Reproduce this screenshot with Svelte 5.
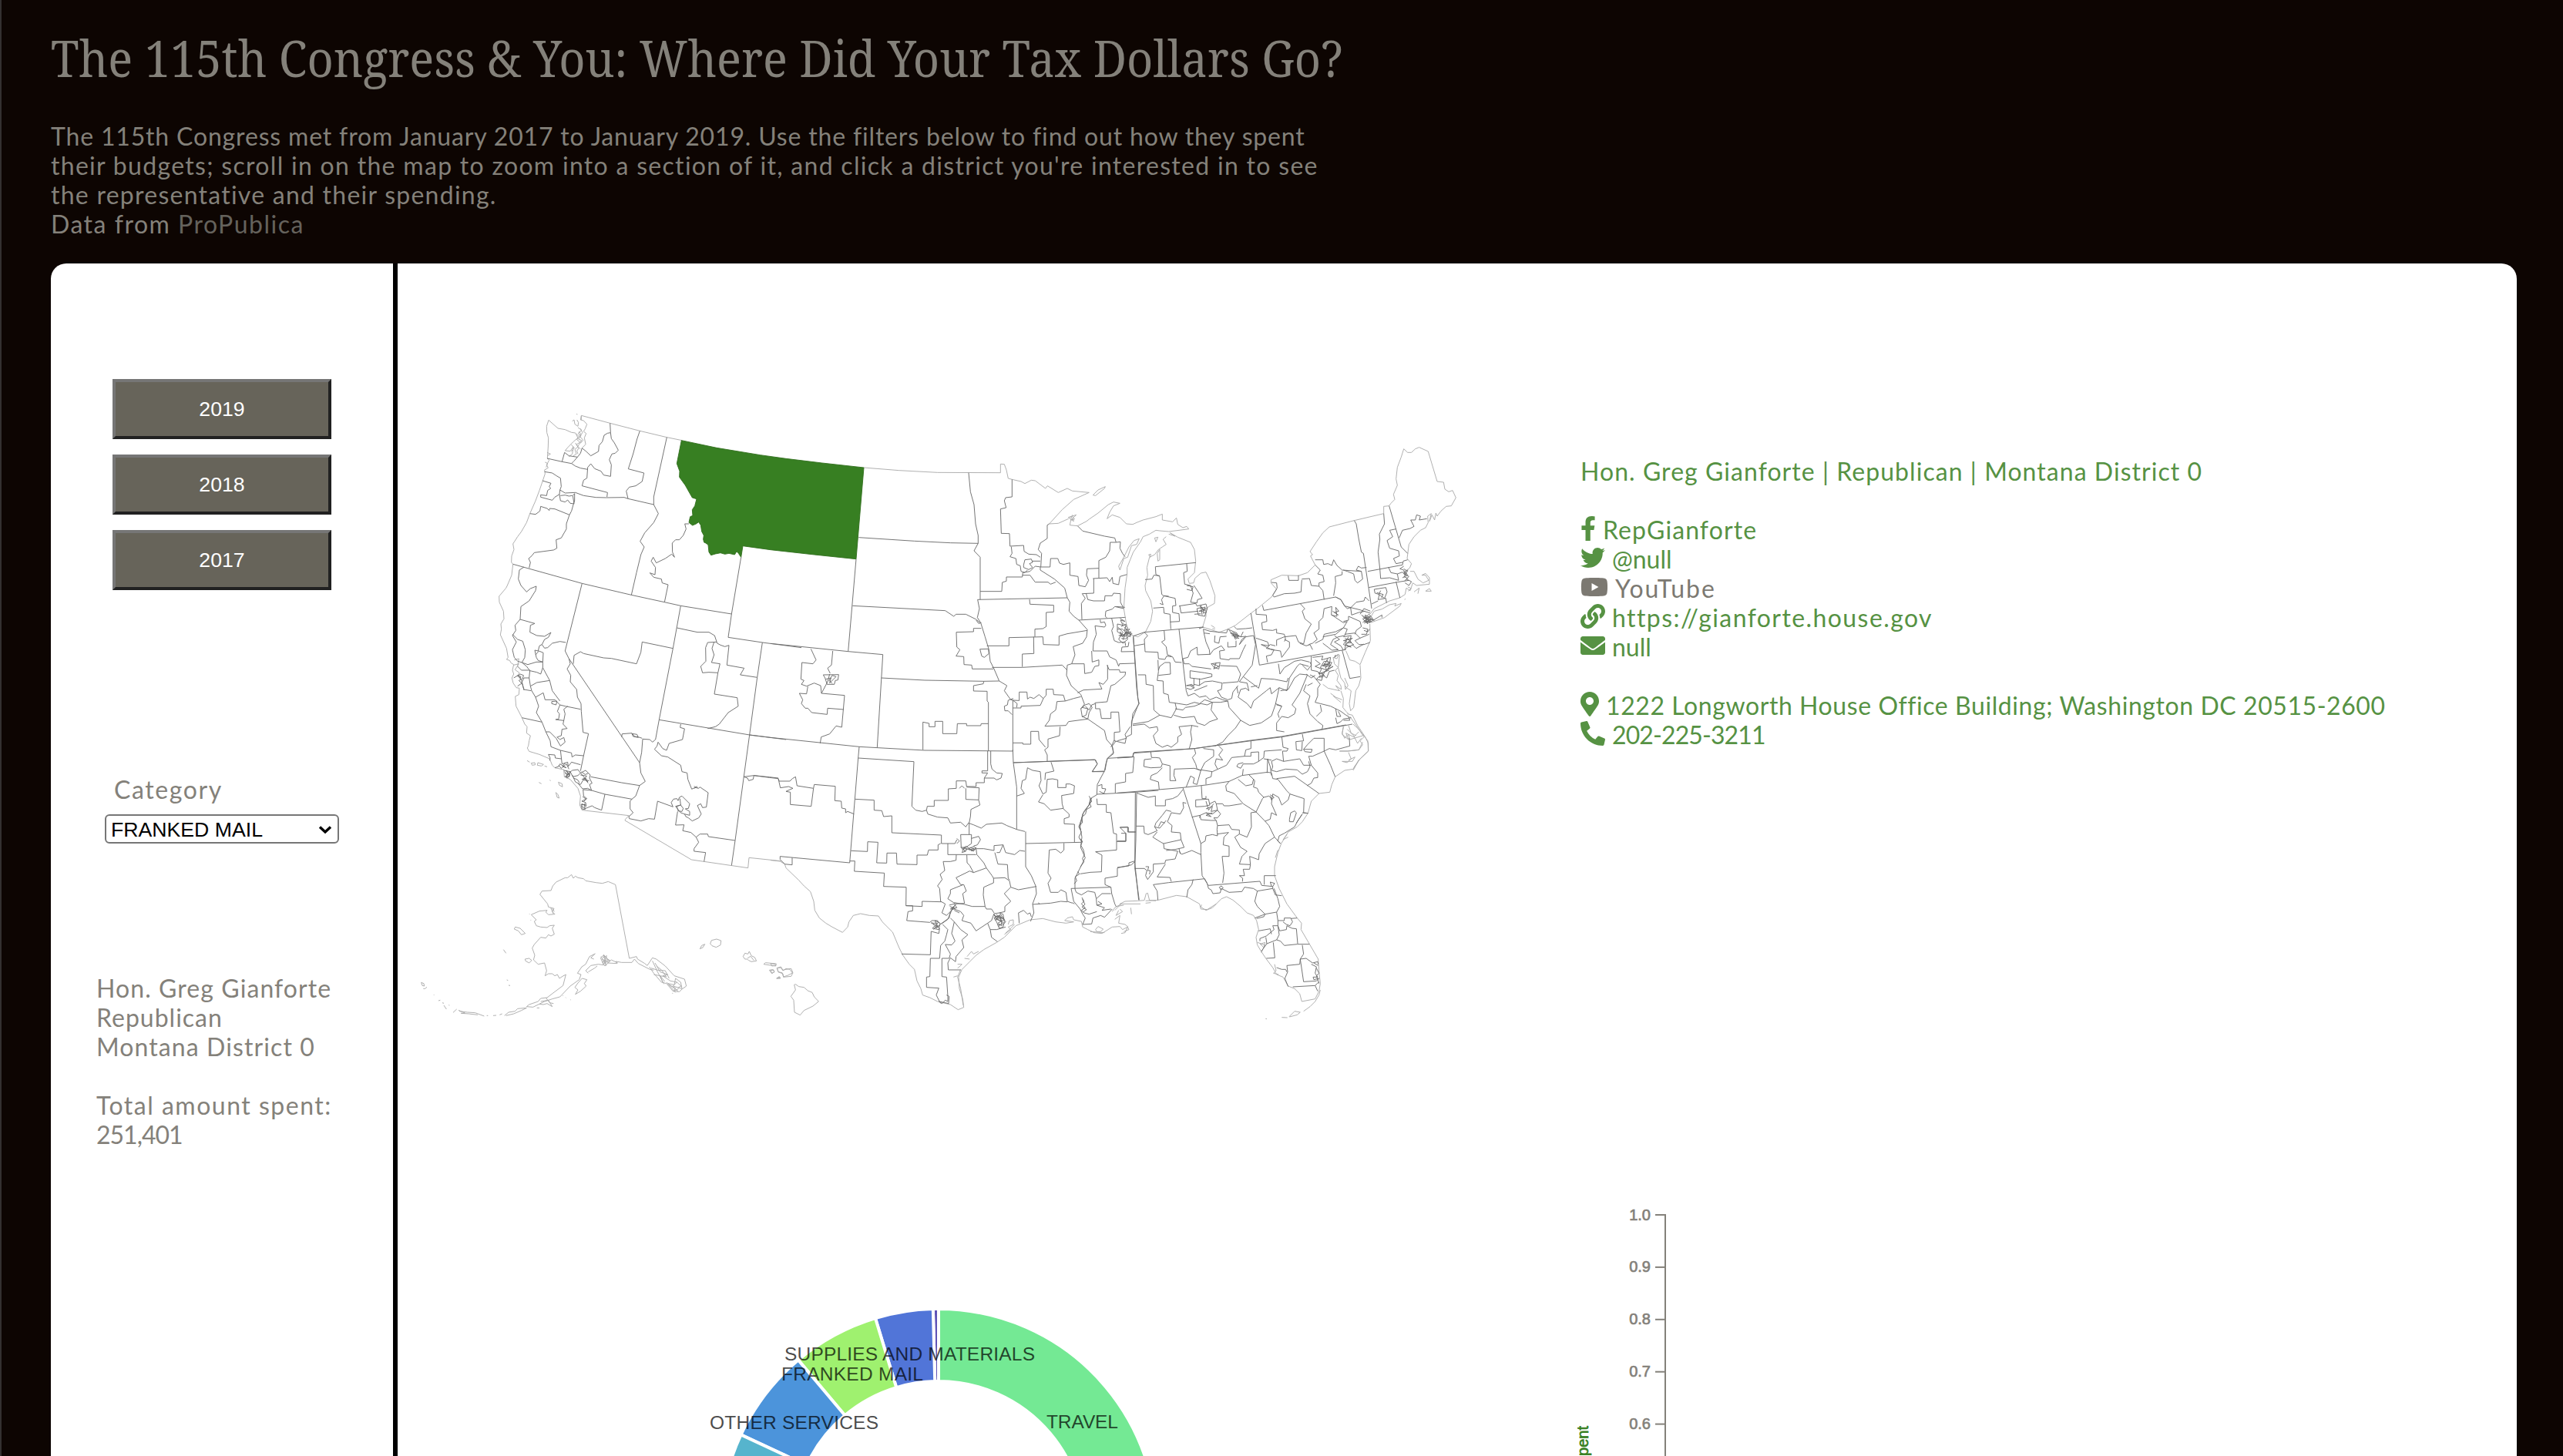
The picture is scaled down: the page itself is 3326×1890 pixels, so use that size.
<script>
  const years = ['2019', '2018', '2017'];

  // Each line of copy carries its own tracking in pixels.
  const intro = [
    { text: 'The 115th Congress met from January 2017 to January 2019. Use the filters below to find out how they spent', track: 0.83 },
    { text: "their budgets; scroll in on the map to zoom into a section of it, and click a district you're interested in to see", track: 1.3 },
    { text: 'the representative and their spending.', track: 1.25 }
  ];

  const summary = [
    { text: 'Hon. Greg Gianforte', track: 1.08 },
    { text: 'Republican', track: 1 },
    { text: 'Montana District 0', track: 1.1 },
    { text: '\u00a0', track: 0 },
    { text: 'Total amount spent:', track: 1.5 },
    { text: '251,401', track: -1 }
  ];

  const contacts = [
    {
      name: 'facebook', w: 320, text: 'RepGianforte', track: 1.1,
      d: 'M279.14 288l14.22-92.66h-88.91v-60.13c0-25.35 12.42-50.06 52.24-50.06h40.42V6.26S260.43 0 225.36 0c-73.22 0-121.08 44.38-121.08 124.72v70.62H22.89V288h81.39v224h100.17V288z'
    },
    {
      name: 'twitter', w: 512, text: '@null', track: 0,
      d: 'M459.37 151.716c.325 4.548.325 9.097.325 13.645 0 138.72-105.583 298.558-298.558 298.558-59.452 0-114.68-17.219-161.137-47.106 8.447.974 16.568 1.299 25.34 1.299 49.055 0 94.213-16.568 130.274-44.832-46.132-.975-84.792-31.188-98.112-72.772 6.498.974 12.995 1.624 19.818 1.624 9.421 0 18.843-1.3 27.614-3.573-48.081-9.747-84.143-51.98-84.143-102.985v-1.299c13.969 7.797 30.214 12.67 47.431 13.319-28.264-18.843-46.781-51.005-46.781-87.391 0-19.492 5.197-37.36 14.294-52.954 51.655 63.675 129.3 105.258 216.365 109.807-1.624-7.797-2.599-15.918-2.599-24.04 0-57.828 46.782-104.934 104.934-104.934 30.213 0 57.502 12.67 76.67 33.137 23.715-4.548 46.456-13.32 66.599-25.34-7.798 24.366-24.366 44.833-46.132 57.827 21.117-2.273 41.584-8.122 60.426-16.243-14.292 20.791-32.161 39.308-52.628 54.253z'
    },
    {
      name: 'youtube', w: 576, text: 'YouTube', track: 1.95,
      d: 'M549.655 124.083c-6.281-23.65-24.787-42.276-48.284-48.597C458.781 64 288 64 288 64S117.22 64 74.629 75.486c-23.497 6.322-42.003 24.947-48.284 48.597-11.412 42.867-11.412 132.305-11.412 132.305s0 89.438 11.412 132.305c6.281 23.65 24.787 41.5 48.284 47.821C117.22 448 288 448 288 448s170.78 0 213.371-11.486c23.497-6.321 42.003-24.171 48.284-47.821 11.412-42.867 11.412-132.305 11.412-132.305s0-89.438-11.412-132.305zm-317.51 213.508V175.185l142.739 81.205-142.739 81.201z'
    },
    {
      name: 'link', w: 512, text: 'https://gianforte.house.gov', track: 1.42,
      d: 'M326.612 185.391c59.747 59.809 58.927 155.698.36 214.59-.11.12-.24.25-.36.37l-67.2 67.2c-59.27 59.27-155.699 59.262-214.96 0-59.27-59.26-59.27-155.7 0-214.96l37.106-37.106c9.84-9.84 26.786-3.3 27.294 10.606.648 17.722 3.826 35.527 9.69 52.721 1.986 5.822.567 12.262-3.783 16.612l-13.087 13.087c-28.026 28.026-28.905 73.66-1.155 101.96 28.024 28.579 74.086 28.749 102.325.51l67.2-67.19c28.191-28.191 28.073-73.757 0-101.83-3.701-3.694-7.429-6.564-10.341-8.569a16.037 16.037 0 0 1-6.947-12.606c-.396-10.567 3.348-21.456 11.698-29.806l21.054-21.055c5.521-5.521 14.182-6.199 20.584-1.731a152.482 152.482 0 0 1 20.522 17.197zM467.547 44.449c-59.261-59.262-155.69-59.27-214.96 0l-67.2 67.2c-.12.12-.25.25-.36.37-58.566 58.892-59.387 154.781.36 214.59a152.454 152.454 0 0 0 20.521 17.196c6.402 4.468 15.064 3.789 20.584-1.731l21.054-21.055c8.35-8.35 12.094-19.239 11.698-29.806a16.037 16.037 0 0 0-6.947-12.606c-2.912-2.005-6.64-4.875-10.341-8.569-28.073-28.073-28.191-73.639 0-101.83l67.2-67.19c28.239-28.239 74.3-28.069 102.325.51 27.75 28.3 26.872 73.934-1.155 101.96l-13.087 13.087c-4.35 4.35-5.769 10.79-3.783 16.612 5.864 17.194 9.042 34.999 9.69 52.721.509 13.906 17.454 20.446 27.294 10.606l37.106-37.106c59.271-59.259 59.271-155.699.001-214.959z'
    },
    {
      name: 'mail', w: 512, text: 'null', track: 0,
      d: 'M502.3 190.8c3.9-3.1 9.7-.2 9.7 4.7V400c0 26.5-21.5 48-48 48H48c-26.5 0-48-21.5-48-48V195.6c0-5 5.7-7.8 9.7-4.7 22.4 17.4 52.1 39.5 154.1 113.6 21.1 15.4 56.7 47.8 92.2 47.6 35.7.3 72-32.8 92.3-47.6 102-74.1 131.6-96.3 154-113.7zM256 320c23.2.4 56.6-29.2 73.4-41.4 132.7-96.3 142.8-104.7 173.4-128.7 5.8-4.5 9.2-11.5 9.2-18.9v-19c0-26.5-21.5-48-48-48H48c-26.5 0-48 21.5-48 48v19c0 7.4 3.4 14.3 9.2 18.9 30.6 23.9 40.7 32.4 173.4 128.7 16.8 12.2 50.2 41.8 73.4 41.4z'
    },
    {
      name: 'address', w: 384, text: '1222 Longworth House Office Building; Washington DC 20515-2600', track: 0.57,
      d: 'M172.268 501.67C26.97 291.031 0 269.413 0 192 0 85.961 85.961 0 192 0s192 85.961 192 192c0 77.413-26.97 99.031-172.268 309.67-9.535 13.774-29.93 13.773-39.464 0zM192 272c44.183 0 80-35.817 80-80s-35.817-80-80-80-80 35.817-80 80 35.817 80 80 80z'
    },
    {
      name: 'phone', w: 512, text: '202-225-3211', track: -0.9,
      d: 'M497.39 361.8l-112-48a24 24 0 0 0-28 6.9l-49.6 60.6A370.66 370.66 0 0 1 130.6 204.11l60.6-49.6a23.94 23.94 0 0 0 6.9-28l-48-112A24.16 24.16 0 0 0 122.6.61l-104 24A24 24 0 0 0 0 48c0 256.5 207.9 464 464 464a24 24 0 0 0 23.4-18.6l24-104a24.29 24.29 0 0 0-14.01-27.6z'
    }
  ];

  // District geometry, stored per region at triple resolution with its own origin.
  const regions = [
    {
      name: 'northwest', x: 520, y: 500,
      coast:
        'M576 136 568 160 569 185 575 205 574 240 571 285 578 292 568 310 574 322 560 330 562 345 552 375 540 410 525 450 503 500 490 535 470 570 455 590 437 618 441 640 432 665 431 690 437 697 432 740 415 780 410 790 383 822 384 845 400 880 402 910 390 930 392 950 388 972 412 1025 418 1060 412 1068 424 1072 430 1082 440 1088 435 1110 440 1125 433 1140 438 1160 450 1178 462 1180 460 1205 446 1212 449 1250 462 1275 472 1295 483 1320' +
        'M576 136 612 168 640 173 665 184 680 186 690 205 670 222 650 243 640 255 660 257 672 240 668 268 655 278M703 135V118L815 148 931 178 1036 203 1095 215M668 140 675 135 678 152 690 160 692 145 686 135M703 120 700 135 712 138 725 152 718 170 712 180 722 188 715 205 720 230 706 245M690 165 705 175 690 188 702 196 692 210 704 215 695 230 688 240 700 248M680 225 690 240 678 250 684 268 672 275M695 180 700 190 695 200M684 190 694 200 686 212 698 222 684 232 694 244 686 256 690 268M698 168 708 184 698 200 710 214 700 226M664 232 676 244 664 258M570 262 583 268 572 274M562 300 572 305 566 320M440 1090 460 1085 445 1108 462 1120 455 1135M442 1070 460 1065 455 1095M684 112 688 114',
      lines:
        'M815 148 817 185 805 187 792 195 785 220 772 235 770 258 740 275 722 258 706 245M817 185 820 208 832 225 847 253 835 265 822 268 812 290 820 310 817 355 790 350 780 335 755 325 740 306 728 320 725 362 712 370 706 392 805 418 803 435M728 328 700 323 680 315 665 305 628 298 570 285M628 298 638 262 655 275 688 280 675 295 665 305M688 280 700 265 706 245M931 178 920 210 905 267 886 326 947 342 940 375 915 392 890 397 878 412 885 442M1036 203 985 435 985 465M620 408 640 420 680 418 712 430 760 437 800 438 870 437 885 442 985 465' +
        'M560 337 590 342 605 352 622 362 625 395 620 408 618 425M552 372 585 382 578 395 584 402 572 410 568 430 545 427 545 436 590 448 600 436 618 425 622 450 640 455 650 447 660 460 675 462 670 430 677 422V450L672 465 665 490 657 505 645 540 645 560 625 595 605 602 608 635 595 642 520 652 510 665 498 675 505 690 500 712M622 430 640 428 655 432 668 430M503 500 525 503 542 490 545 472 570 480 578 488 580 480 600 482 657 505M437 697 706 772 898 817 1027 845 1090 859 1288 891M985 465 1003 500 985 535 950 575 932 608 948 630 935 660 918 730 898 817' +
        'M1122 540 1106 540 1111 560 1100 585 1085 602 1070 602 1057 615 1058 650 1066 670 1055 658 1030 675 995 692 983 670 975 685 992 710 990 738 970 731 985 748 1015 755 1018 770 1041 777 1027 845M1325 670 1288 891 1275 982 1408 1002 1560 1022M1090 859 1060 1025 1006 1303M706 772 640 1035 655 1065 930 1470M672 1085 675 1052 700 1038 712 1045 790 1062 820 1064 918 1085 935 1040 940 1000 1060 1025M1075 945 1155 962 1200 962 1222 975 1232 1005 1245 1012 1262 1018 1278 1013 1270 1090 1337 1102 1322 1128 1388 1138M1230 1000 1195 1002 1187 1022 1188 1075 1168 1095 1175 1120 1200 1118 1235 1120 1243 1085 1210 1080 1220 1050 1212 1025 1220 1000M1235 1120 1221 1203 1310 1217 1314 1250 1275 1275 1240 1320 1225 1330 1195 1337M1408 1002 1388 1138 1358 1362' +
        'M480 708 462 720 458 755 468 780 490 805 505 792 528 783 525 800 500 840 468 862 465 912 445 935 448 955 435 975 450 1000 435 1030 442 1060 455 1075 472 1080M465 912 522 928 505 935 503 962 530 975 560 978 585 963 575 982 560 990 550 1010 540 1015 535 1035 522 1032 528 1060 535 1072 553 1078 555 1042 538 1035 525 1050M435 970 455 990 475 997 485 1030 483 1060 472 1080 495 1088 528 1078 553 1078V1100L580 1150 590 1190 620 1230M550 1010 560 1024 572 1022 590 1005 620 998 643 1002M472 1080 490 1095 503 1112 530 1118 545 1125 553 1100M455 1095 470 1110 503 1110 500 1140 505 1172 530 1158 580 1150M505 1172 510 1190 525 1215 537 1250 528 1275 550 1312M655 1065 660 1085 648 1105 662 1130 660 1155 685 1185 688 1215 702 1240 703 1270 710 1352M508 1190 480 1185 472 1160 455 1172M525 1215 555 1198 562 1225 600 1225 620 1245 640 1250 700 1262M588 1232 608 1230 605 1245 588 1240ZM472 1295 550 1312M620 1245 610 1270 618 1280 615 1300 603 1302 635 1306 640 1280 635 1262 650 1250M440 1140 465 1125 478 1130 475 1142 460 1150 470 1160 480 1140 500 1140M455 1130 470 1148 480 1188M458 1130 468 1135 466 1142Z'
    },
    {
      name: 'southwest', x: 520, y: 900,
      coast:
        'M483 120 492 130 490 155 505 165 500 185 497 205 493 213 500 226 540 238 580 255 590 280 600 290 635 297 637 325 660 335 690 370 700 400 697 435 706 455 888 476 875 490 873 495 1132 648 1352 680 1356 640 1480 653M492 262 502 268M508 272 522 270 524 278 512 280ZM534 270 556 277 548 283 532 280ZM560 283 570 286M538 347 548 352M580 338 584 340M614 346 628 352 630 364 618 358ZM604 386 612 394 617 408 609 405Z' +
        'M836 745 808 733 785 740 760 737 720 730 712 722 690 718 680 712 672 720 665 706 650 718 640 718 605 735 592 750 585 768 550 770 542 783 572 820 575 832 597 838 590 850 600 860 575 862 565 852 570 845 540 848 508 862 528 882 520 888 528 905 545 910 570 912 580 905 598 903 590 915 598 938 585 945 575 940 565 953 545 950 520 978 512 992 522 1020 517 1038 535 1055 560 1050 568 1080 562 1100 575 1092 590 1092 600 1100 610 1095 618 1110 630 1102 643 1095 632 1138 600 1162 570 1185 545 1188 535 1200 500 1212 490 1220 515 1222 560 1200 590 1190 620 1182 660 1140 695 1115 702 1095 688 1090 705 1065 720 1055 735 1025 757 1014 740 1030 752 1035M584 835 594 858M590 838 598 850' +
        'M730 1090 720 1080 740 1060 770 1055 790 1058 778 1030 790 1020 800 1035 815 1040 805 1050 842 1052 838 1044 860 1048 900 1048 910 1035 925 1052 970 1075 985 1078M780 1025 800 1060 790 1018 812 1040 785 1045 795 1062 820 1038 845 1050M784 1036 806 1044 792 1052 802 1022 786 1030M730 1085 755 1070 765 1062M836 745 890 1032 918 1025 922 1035 950 1052 960 1060 980 1030 995 1035 1030 1062 1065 1100 1105 1113 1112 1140 1095 1152 1085 1162 1060 1160 1035 1130 1015 1125 985 1090 968 1065' +
        'M980 1042 1000 1085 1025 1132M990 1050 1010 1085 1040 1095 1020 1100 1050 1120 1075 1125 1060 1140 1095 1150 1090 1125 1070 1110 1065 1135 1040 1130 1080 1160M996 1062 1016 1078 1034 1104 1010 1100 1028 1122M1046 1136 1070 1148 1062 1160 1082 1150M1074 1124 1092 1140 1080 1146M975 1070 1000 1078 1030 1080 1045 1110M985 1095 1010 1100 1020 1125M1035 1125 1055 1148 1070 1165M706 1110 725 1115 715 1130 722 1140 700 1160 680 1172 690 1155 678 1145 690 1128ZM446 910 465 915 485 935 470 940 458 925 442 918ZM400 998 410 1012M484 1035 500 1032 510 1040 500 1050 486 1042ZM413 1116 418 1118M420 1137 426 1138M80 1126 90 1130 92 1140 84 1138ZM88 1150 95 1150 102 1144M128 1173 130 1175M147 1197 154 1195M162 1205 168 1207M168 1215 178 1230M187 1214 190 1215M204 1243 218 1230M228 1238 260 1242 290 1244 325 1257M225 1234 250 1245 235 1246 265 1248 300 1252M335 1255 340 1255M360 1255 372 1254M385 1252 395 1248M404 1255 420 1242 445 1238 455 1228 490 1225 470 1235 440 1248 410 1255M530 1225 540 1225M545 1200 575 1195 590 1220 570 1208 555 1212 540 1210M565 1185 580 1205 595 1208M630 1176 632 1178M642 1184 644 1186M660 1192 662 1194M1057 1168 1060 1168M500 858 502 860M505 885 507 883' +
        'M1165 995 1172 982 1184 977 1176 990ZM1205 975 1210 962 1230 957 1247 963 1245 980 1228 989 1212 983ZM1333 1025 1340 1012 1352 1015 1357 1005 1365 1022 1378 1028 1385 1042 1365 1045 1355 1040 1348 1035 1340 1035ZM1350 1032 1362 1024 1375 1040M1413 1055 1420 1049 1462 1053 1460 1062ZM1435 1078 1450 1076 1454 1085 1445 1091ZM1465 1070 1480 1065 1488 1078 1500 1075 1520 1072 1527 1088 1508 1098 1490 1104 1485 1088 1470 1085ZM1463 1110 1474 1103 1478 1109Z',
      lines:
        'M550 112 565 150 582 185 585 208 622 222 665 232 667 248 680 240 712 243M565 150 580 150 605 175 622 205 640 190 635 172 620 180 608 170M635 105 632 120 648 137 628 140 625 165 610 170M710 152 731 157 712 243 700 302M622 222 628 275 650 268 652 285 665 268 700 278M575 238 600 240 602 252 625 255M575 238 582 252 580 262M600 290 615 285 620 275 645 290 630 285 640 270M615 280 625 292 645 275 655 295M635 300 660 305 655 325 645 330M638 305 650 320 640 325 655 310 668 300 690 297 700 310 720 300 738 318 735 330M642 300 652 312 644 326 658 322 648 306M660 305 670 325 690 320 700 310 710 322 728 345 720 330 705 335M640 312 658 318 645 300M668 318 680 345 700 355 715 330 730 350M690 350 708 372 728 370 743 378 735 355 745 350 735 330M700 318 724 322 712 338 734 340M704 306 718 316 730 312M672 330 688 336 696 348' +
        'M740 325 860 348 930 359M860 170 862 158 900 155 910 168 925 170 940 175M900 157 920 160 925 172 905 168ZM930 270 938 230 942 178 970 180 980 190 992 180 1006 103M930 270 935 310 952 343 930 359 915 400 900 412 893 420 893 450 905 465 888 480 890 488 935 497 965 488 988 490 1000 420 1060 442M710 375 743 378 795 393 900 412M795 393 782 455 755 445 745 438 710 452M710 375 712 400 725 410 705 420 720 425 722 440 705 430 705 450 718 452 715 430M700 435 720 432M708 402 722 412 712 422M702 440 716 446' +
        'M1006 103 1358 162 1500 180M1090 120 1088 133 1105 138 1097 180 1045 195 1035 222 1020 215 1002 190 998 205 988 218 1015 243 1040 248 1090 280 1095 305 1115 310 1118 335 1133 373 1150 365 1160 370 1165 365 1197 387 1190 443 1175 445 1168 430 1155 437 1170 470 1160 485 1135 497 1120 485 1110 480 1105 470M1142 362 1156 370M1144 370 1154 362M1060 442 1053 425 1062 412 1075 410 1080 418 1085 405 1095 400 1125 430 1120 448 1108 450 1125 460 1125 475 1105 470 1090 465 1078 450 1070 440 1090 435 1087 410M1075 440 1090 435 1100 448 1095 460 1080 458ZM1078 460 1070 513 1103 512 1098 535 1130 542 1150 560 1165 548 1195 548 1198 558 1302 573M1150 560 1160 580 1142 605 1142 615 1187 620 1181 655M1358 162 1302 573 1288 670M1336 325 1350 330 1355 340 1372 335 1375 320 1435 326 1470 330'
    },
    {
      name: 'plains', x: 1000, y: 560,
      coast:
        'M363 141 500 152 650 160 895 161V127L910 128 918 150 925 183 940 187 975 195 990 203 1015 190 1030 192 1045 203 1070 222 1078 212 1120 238 1155 222 1175 232 1240 238 1180 265 1135 305 1085 360M1085 360 1120 358 1160 340 1172 330 1165 365 1195 368 1230 350 1240 342 1275 318 1315 285 1335 275 1360 280 1335 290 1320 315 1310 340 1330 325 1360 335 1385 360 1410 362 1425 355 1450 345 1500 332M1158 335 1190 325 1170 345 1185 340M1175 325 1180 350 1165 340M1255 248 1275 228 1303 215 1300 222 1265 250Z',
      lines:
        'M771 161 778 235 792 285 798 360 808 405 808 436 792 465 816 490V655M343 413 560 427 700 434 808 436M333 497 302 857M319 679 680 698 713 720 722 712 760 712 800 732 815 745M0 826 302 857 437 869 415 1231M431 960 600 969 830 973 890 972M940 187V255L915 258 910 270 917 297 895 302 898 397 930 398 932 447 985 444 987 467 1005 478 1035 480 1050 490M937 449 940 475 932 488 955 495 958 518 972 523 975 545 990 550 1000 540M985 520 990 500 1015 497 1020 510 1008 515 1020 530 1005 538 985 530ZM1018 505H1050M1085 360 1077 365V417L1050 435 1042 460 1055 475 1052 528 1030 525 1010 545 982 550 980 567 918 567 918 583 902 588 900 623H816M980 560H1010L1030 587 1080 587 1090 595 1110 587M1050 528V540L1105 575 1145 610 1155 648M806 655 1155 648 1165 665 1162 700 1180 720 1200 735 1233 772M806 655 813 690 805 725 818 745 835 800 850 850 855 895 870 925 890 972 920 990 910 1010 935 1045 943 1047V1245M800 735 810 748 820 745' +
        'M820 767H790V780L723 782 725 840 737 850 722 875 752 877 753 908 783 910 785 925H868M815 848 848 847 850 865 832 880 822 875ZM1008 654 1010 673 1102 677V703L1073 705 1073 760 1060 768 1029 770V800M842 835H928V803L1060 800 1062 830 1123 832V797L1155 788 1185 783 1233 775M1024 800 1025 865 980 867V917M862 919 980 919 1135 910 1155 930M1233 772 1230 800 1215 825 1178 838 1185 870 1172 905 1155 910 1152 950 1170 990 1208 1025 1222 1062 1208 1080 1213 1110 1235 1120 1300 1165 1308 1200 1330 1225 1335 1250 1310 1275 1302 1320' +
        'M943 1077 975 1077V1070L1050 1067 1062 1040 1045 1025 1025 1040 1010 1035 1000 1042 998 1015H968V1048L943 1047 960 1060 958 1075M1062 1040 1073 1027V1004H1100L1102 1025 1140 1027 1147 1050 1180 1040 1208 1033M1147 1050 1115 1052 1110 1085 1090 1100 1085 1125 1068 1148 1150 1145 1160 1130 1235 1120M1127 1150 1125 1185 1080 1198 1080 1230 1067 1240 1077 1260V1287M943 1213 982 1213V1218H1013V1168H1043L1045 1200 1070 1230M945 1290 1262 1278 1272 1295 1252 1325 1300 1323M1207 1080 1225 1065 1240 1060 1252 1075 1240 1095 1235 1120M1213 1075 1235 1080 1228 1105 1212 1112M1225 1070 1240 1085 1250 1065 1265 1060V1080' +
        'M593 1240V1132L617 1137V1150H640V1129H670V1177H725L727 1138H763V1146H818L820 1138H848M830 973 828 983 790 990V1011L843 1012V1050L848 1055V1245M945 1040 925 1047 922 1065 910 1070 912 1088 925 1088 940 1103M-82 1182 0 1192 345 1228 600 1242 943 1245' +
        'M157 847 177 890 165 905 122 900 118 965 130 970 120 985 140 992 170 980 195 990 198 1020 288 1028 277 1152 255 1147 230 1178 197 1190 193 1215M242 855 237 910 222 922 232 942M205 948 265 947 262 968 252 970 248 985 220 985 212 960ZM215 965 235 960 230 980 245 965 255 955 240 950 228 970 240 982M230 945 222 975 198 1020M145 993 140 1022 112 1020 125 1045 120 1060 135 1078 145 1078 160 1095 220 1102 222 1078 285 1083' +
        'M1195 368 1215 388 1300 408 1340 415 1345 432 1322 432 1320 465 1305 490 1278 503V570M1345 432 1362 430 1360 455 1370 475 1380 488M1052 528 1088 528 1090 495 1118 495 1125 513 1140 518 1165 512 1165 560 1197 565 1200 600 1225 605 1238 580 1230 560 1232 535 1278 533M1255 573 1310 570 1320 585 1330 568 1333 592 1355 597 1360 565 1388 557M1258 573 1258 630 1213 632 1225 650 1210 670 1212 732M1228 630 1235 655 1257 660H1300L1302 640 1330 640 1335 630 1362 632V665L1375 690 1340 682 1330 692 1305 700 1303 720 1310 727M1200 735 1383 724M1345 682 1380 685' +
        'M1283 733 1285 745 1300 742 1305 755 1300 762 1263 757 1268 790 1257 820 1255 855H1310L1320 878 1345 890 1355 915 1358 905 1418 903M1250 855 1252 898 1278 890 1278 912 1262 915 1250 938 1223 943 1221 905H1172M1328 728 1335 760 1328 775 1338 815 1355 822 1380 820 1382 835M1412 800 1425 1000 1433 1060 1405 1130V1150M1415 857 1365 858 1368 840 1392 838 1395 820M1310 910 1318 928 1358 928 1360 938 1382 937 1380 950 1340 985 1325 990 1310 1053 1262 1057M1195 1018 1218 1007 1290 1003 1278 978 1295 985 1312 965V910M1265 1080H1282L1288 1118 1325 1118V1093H1355L1360 1170 1338 1172V1205L1380 1215 1385 1190 1405 1180V1150M1330 1225 1345 1205M1360 728 1380 740 1362 735 1372 755 1350 750 1350 780 1365 790 1355 810 1372 825 1390 810 1385 790 1400 800 1402 780 1385 785 1370 770 1350 770M1365 760 1385 750 1378 775 1398 770 1370 800 1360 780 1380 800 1395 785 1405 795M1370 745 1390 765 1380 790 1355 795M1372 812 1382 780 1408 788M1376 762 1398 782 1378 786 1404 790 1382 808 1366 806M1352 762 1372 782 1362 798 1384 792'
    },
    {
      name: 'northeast', x: 1450, y: 560,
      coast:
        'M150 332 175 322 175 345 215 352 230 337 235 362 255 375 270 370 278 380 240 385 200 390 165 387 150 385 125 400 100 410 90 430 62 470 38 530 38 555 30 610 25 690 35 750 45 780 60 795 80 800 110 780 130 740 137 700 130 660 110 620 108 600 118 560 115 530 125 490 145 480 160 460 175 450 190 440 178 420 190 410M5 525 25 490 45 450 65 425 85 418 75 440 55 445 40 490 25 495 10 540ZM145 415 158 412 150 430ZM122 480 130 478 128 490ZM155 475 165 460 165 500 158 505ZM200 400 225 408 205 395 235 412 285 432 300 460 305 505 300 550 275 575 280 592 297 590 302 572 325 552 345 548 360 580 380 640 378 670 360 680 345 690 345 720 332 762 365 772 395 783 430 770 460 755 520 708 545 690 600 645 620 615 598 590 598 578 640 560 705 562 740 550 770 520 752 485 760 480 750 468 775 430 800 395 825 372 922 347 1037 320 1037 292 1058 290 1065 280 1080 265 1075 245 1090 210 1085 185 1090 140 1105 100 1115 68 1130 82 1145 82 1160 68 1175 62 1210 78 1245 195 1270 198 1275 225 1290 235 1305 230 1318 258 1300 290 1280 292 1260 310' +
        'M1260 310 1245 330 1240 318 1235 345 1225 325 1215 350 1222 320 1208 330 1210 355 1200 375 1180 385 1155 410 1135 440 1130 480 1128 495 1145 515 1138 532 1120 545M1140 545 1155 545 1170 575 1190 590 1212 580 1200 560 1185 560 1200 553 1215 570 1215 595 1165 600 1150 590 1140 620 1125 610 1120 635 1100 648 1060 660 1000 690 985 710M1130 605 1144 612 1132 622M1155 625 1175 610 1170 632M1200 622 1215 612 1222 622ZM1118 655 1122 652M985 745 1040 725 1100 680 1105 670 1080 680 1085 670 1060 675 1030 692 1000 700 985 725M983 750 985 815 965 860 945 908 925 895 905 890 890 855M945 910 948 960 940 990 928 1010 920 1075 908 1088 903 1060 910 1010 895 1000 885 990M862 868 855 885 840 880 845 905 860 920 848 930 860 950 855 970 870 990 872 1005 850 990 865 1010 820 1000 800 985M865 870 860 920 870 960 885 980 888 1005 898 990 885 960M830 1020 850 1035 875 1045M870 1010 880 1040 878 1075 890 1090 900 1100M840 1030 870 1055M895 1100 915 1105 935 1145 965 1190 977 1215 977 1245 940 1280 918 1320M905 1110 930 1145 960 1190 945 1205 955 1220 940 1240 895 1245 865 1245M900 1280 925 1268 915 1285 875 1285M880 1150 875 1180 900 1200 890 1175 920 1190 940 1170M900 1145 910 1175 930 1185M365 755 380 765M370 768 380 770',
      lines:
        'M520 708 553 910 875 852 905 962 945 955M565 677 570 697 850 645 870 655 885 680 945 695 985 708M922 347 930 360 940 420 950 470 958 475 978 608 990 690M1037 320 1040 360 1020 400 1022 420 1015 470 1022 535M975 545 1110 520 1113 505 1130 500M978 608 1090 587 1135 580M1085 585 1100 648M1058 290 1105 450 1130 475M1085 380 1060 385 1072 410 1050 425 1060 455 1095 465 1098 485 1075 495 1085 515 1110 510M1097 415 1110 385 1140 378 1155 370 1142 345 1160 345 1165 325 1180 330 1175 345 1205 340M1022 535 1025 573 1060 570 1095 580 1090 555 1065 550 1055 528M1090 555 1110 548 1120 560 1115 540 1100 535 1115 525M1115 535 1130 545 1118 555 1135 565 1125 575 1145 585 1135 600 1120 590M1110 570 1130 560 1120 545 1132 540M1114 548 1126 552 1116 566 1130 572 1118 582M1000 615 1045 608 1050 625 1040 650 1018 635 1025 620M1000 615 1003 630 1020 635 1015 655 1045 650 1048 668M1010 628 1035 635 1028 648M990 672 1015 660' +
        'M770 500 800 500 803 518 820 515 835 522 842 500 855 522 875 540 950 545M770 520 790 540 780 555 800 560 805 585 785 590 785 603 755 600 748 573 718 575M705 560 705 580 668 580 665 562M718 578 715 625 690 630 650 632 610 645 605 638 622 610 620 590 600 588M785 603 800 620 805 655M875 545 875 558 848 565 850 590 842 640M880 540 895 545 920 555 925 580 935 590 955 575 950 545 930 540 938 525 950 532 970 530M905 690 930 665 960 660 965 645 980 660M850 645 870 655 885 680 895 690 908 685 912 715 940 705 965 700M945 712 960 690 985 700M950 715 990 740 960 740 985 720 955 730 975 750 965 715 1000 735 960 728 980 712 995 730M956 722 978 736 962 746 988 732 970 724M964 718 984 744 968 742M955 745 965 735 980 745 1030 715 1030 725' +
        'M540 690 540 712 580 715 582 740 562 745 565 772 605 775 620 770 620 785 650 790 655 810 650 818M720 680 730 690 720 700 730 730 755 750 735 785 725 828 705 820 695 795 650 800 620 812 620 835M720 680 713 672M710 825 735 835 750 830 760 850M540 805 585 820 590 835 560 830M560 830 600 850 635 855 640 880 670 840 670 820 650 810M585 900 580 875 600 870 610 850 580 845 595 830 615 835M805 690 835 682 833 715 855 720 850 685 862 700 845 705 860 715 838 700M805 690 800 725 785 740 785 770 765 785 778 810 760 825 745 830M835 715 880 745 895 740 880 765 850 780 805 790 800 810 770 825M880 740 900 735 900 720 945 740M800 800 850 790 880 765 895 770 885 795 860 800 840 810 830 830 860 850 835 852 800 825M845 795 865 810 845 820 870 835 880 852M880 800 910 795 905 820 920 830 895 840 885 850 892 815 880 815 915 805 890 830 910 840 880 830 900 800M886 806 906 814 894 824 912 822 898 808M885 790 925 785 945 805 980 790M945 805 925 815 940 830 960 830 983 822M915 830 930 845 960 828M945 740 950 760 930 775 925 790M955 765 975 770 970 790 950 790M982 770 975 780 960 775M890 850 875 852' +
        'M148 527 305 511M148 527 150 557 165 565 173 635 180 640 225 650 228 678 215 680 215 705 240 710 242 740 205 742M270 515 272 545 258 550 262 595 285 600 295 630 285 665M108 577 135 575 142 560 165 562M140 688 180 685 182 708 205 712 208 770M165 670 178 675 172 655 182 640 200 642M240 680 305 670 310 680M243 680 248 707 315 700M270 600 295 605 290 620 270 615M285 665 310 668 312 655 330 650 315 625 298 600M310 680 345 672 350 690 340 720 315 715 310 690 330 685 335 700 318 700 345 690M325 675 330 715M300 712 325 710M320 680 345 700M322 690 342 684 334 708 348 704M62 797 105 782 240 770 268 1010M240 770 335 762 318 768M62 797 80 1040 85 1060 60 1100 55 1150' +
        'M105 782 118 795 105 810 108 858 158 860 160 885 185 888 192 875 215 878 225 898 250 900M65 835 105 828M182 775 185 812 172 820 190 838 195 870 210 875M80 948 110 948 112 985 140 990 142 1085 165 1105M158 890 160 935 155 970 178 972 180 1020 198 1025 202 1055 225 1058M205 900 207 945 160 950M160 930 165 915 185 900 205 900M255 885 275 880 285 855 310 840 312 870 360 868 358 850 345 820 337 785 360 788M337 785 335 770 360 778 425 785M425 785 430 770 465 785 470 800 445 795M380 795 378 820 395 825 400 800 425 798M360 870 375 850 405 835 418 852 398 855 400 885 435 890M430 820 430 840 462 838 462 815M435 775 460 800 440 785 475 795 460 810 450 790 480 800 490 780M448 782 468 792 456 802 474 806M455 760 465 770 500 768 525 765M480 800 500 798 485 810 475 830 500 800 530 795 538 830 525 910 490 955 475 975M435 890 438 885 475 885 490 850 500 830M255 885 260 905 280 905 290 915 365 925M365 905 400 900 395 925 378 920ZM370 905 395 915 375 925 385 900M400 912 465 915 480 945 470 975 410 980M283 932 283 960 325 965 368 955 368 945 340 940ZM298 962V990H270M298 985 320 990 320 962' +
        'M268 990 290 985 300 998 285 1005 270 1000M285 990 298 1000M268 1010 275 1030 300 1020 320 1035 345 1030 360 1045 385 1035 410 1045 430 1050M320 988 340 975 370 972 408 980 405 1005 390 1010 405 1035 430 1045 445 1040 450 1015 470 990M300 1010 350 990M475 975 505 980 512 1010 500 1000 480 1005 470 1035 505 1060 520 1078 530 1050 580 1010 595 998 600 1022 630 998 660 1010 670 960 700 915 710 905 745 915M465 995 470 1020M490 955 550 1000 560 962 610 965 660 975 665 960M545 990 520 995M627 905 633 945 650 920 690 895 715 890 748 898M430 1050 435 1075 480 1125 515 1145 560 1135 600 1108 615 1065 630 998' +
        'M430 1050 400 1055 370 1055 340 1045 320 1060 300 1055 270 1065 225 1058 230 1080 210 1115 165 1105 120 1130 60 1140M225 1080 255 1085 265 1075 300 1070 325 1060 350 1065 370 1055 365 1085 390 1120 360 1130 340 1145 310 1135 300 1110 255 1115 220 1105M50 1150 30 1180 35 1195 0 1205M60 1145 105 1140 125 1155 155 1150 158 1165 140 1185 150 1215 175 1230 195 1222 210 1230 235 1210 235 1190 250 1180 240 1150 290 1145 285 1170 290 1200 280 1235M290 1145 315 1150M480 1125 460 1155 430 1185 410 1210 380 1225M0 1272 60 1268 65 1250 300 1235 520 1205 640 1190 915 1140M740 948 710 1020 680 1065 695 1080 690 1100 665 1115 640 1110 620 1135 620 1165 650 1170M740 948 710 945 690 960 665 1005 635 1010M620 1065 640 1070 625 1100 630 1115M640 1070 615 1060M750 948 765 955 790 985 780 1000 780 1030 770 1055 790 1060 830 1070 850 1080 870 1090 890 1105 900 1110 905 1125 880 1125M735 985 725 1010 750 1030 740 1060 750 1100 780 1130 800 1145 797 1160M790 1065 795 1090 775 1110M850 1115 855 1138 870 1130 880 1120 910 1115M740 990 760 980M850 1080 855 1110 870 1110 860 1090M735 945 755 960 770 950' +
        'M755 875 755 930 780 935 790 950 775 965 795 970 800 950 815 960 825 935 845 930M760 880 800 875 795 890 830 880 825 910 805 905 815 930 790 920 805 895 835 900 820 925 840 915 800 940M796 912 826 902 810 918 832 910 808 936 824 930M782 938 800 946 786 958 806 950 794 938M770 890 790 905 770 915 795 925 785 945 808 935 795 960M750 898 755 910 740 930 720 910M815 890 825 905 800 915 820 885M850 870 845 880 860 868M780 1150'
    },
    {
      name: 'south', x: 1000, y: 940,
      coast:
        'M0 530 37 534 55 545 60 560 110 608 130 630 155 652 168 690 172 725 190 755 215 775 240 790 280 811 300 790 305 770 322 745 350 738 385 745 420 747 435 770 475 810 500 870 515 900 540 935 560 955 570 1000 585 1030 592 1055 620 1065 650 1080 700 1092 730 1112 752 1103 748 1070 735 1030 732 985 745 955 775 925 800 900 830 878 880 850 910 830 955 785 1010 762 1060 757 1110 770 1150 775 1180 770 1145 765 1155 755 1175 750 1180 762 1210 768 1215 790 1235 800 1260 812 1290 815 1330 790 1360 788 1370 800 1390 790 1380 812 1365 815M750 1095 740 1030 728 985 740 955M765 1100' +
        'M1390 790 1395 800 1375 808M1265 800 1275 788 1295 798 1285 808 1270 808ZM1245 808 1300 812M1340 760 1360 745 1355 775 1380 780 1392 790M1340 725 1365 700 1340 715 1330 730M1355 725 1345 745 1370 730 1360 720M1360 700 1380 690 1430 688 1455 686 1462 660 1468 658 1475 686 1500 688M1345 710 1375 705M1360 700H1440M1460 697 1480 695M1402 715 1405 740M925 780 930 765 945 762 945 780 925 790 935 800 915 815 925 805M910 820 950 780M765 905 782 885 790 895 810 885M755 912 775 915M728 935 745 935 735 945 728 950M712 985 728 980' +
        'M0 932 18 935 20 940 5 942ZM0 958 12 958 15 965 5 970ZM25 950 40 948 48 960 60 952 75 955 86 970 80 982 50 985 48 972 30 965ZM25 990 35 985 38 990ZM92 1015 97 1013 110 1022 130 1025 145 1038 162 1045 170 1062 187 1080 165 1098 130 1115 115 1133 93 1122 90 1075 79 1060 97 1035Z',
      lines:
        'M345 88 341 132 558 146 550 320 565 335 590 340 607 335 610 320 637 320V297H692V252L723 250V221H760L763 243H800V228H832V210H870L880 217 897 210 902 192 880 190 862 175 857 155V105M845 105V182H823V190H845L832 210M735 250 745 240 755 250M763 245 812 248 810 295 760 293V250M810 295 815 315 780 332 778 360 773 385 773 430M607 335 612 350 650 362 690 365 700 385 740 382 760 400 770 385 790 392 820 405 840 390 900 385 920 395 958 410 990 418M943 100 945 150 958 245V410M341 132 328 292 308 540 37 515 37 527 55 545 84 548 84 520M328 292 403 296V335L433 337 440 360 472 357V423L665 432V465H690' +
        'M313 493 377 496 378 458 418 460 413 540 452 541 453 502 490 502 492 545 570 547V510H610L615 490 652 490V470L662 465M308 533H328L326 573 443 580 440 632 528 635 527 707 590 710 590 690 665 692M690 465V508L765 508H800M690 465H718L725 450M740 430H782V465L760 480 742 480ZM782 445 810 437 817 450 805 470 790 475M740 480 760 495 745 500 755 480 775 490 800 480 790 495 770 485 795 475M745 490 760 475 785 492 800 485M748 482 766 488 752 496M776 480 792 486 780 494M725 445 735 455 725 465M800 485 830 485 870 492M870 492V473L905 470 892 500 880 500M905 470 915 500 950 508 970 492 990 495M873 500 885 545 922 547 925 600 930 607M800 485 803 508 830 540 840 560 862 590 868 600 912 598 930 610 935 635M764 510 765 540 775 550 790 578 840 560M723 508 722 530 700 535 672 535 678 570 660 585 668 605 650 630 658 640 662 690M790 578 775 572 722 598 740 625 752 625M752 625 762 650 748 660 755 698 720 700 690 680 700 660 700 645 750 625M868 600 868 618 830 635 828 665 835 710 785 710 755 702 715 695M935 635 965 645 1035 632M935 635 910 660 935 690 912 710 912 730 890 735M835 710 840 720 860 720 870 735' +
        'M527 707H553V727L535 730 530 765 620 772 628 765 650 765 655 775M662 690 680 700 667 735 685 745 700 730 715 710M695 705 715 700 725 715 700 720 720 705M698 710 718 718 704 724 722 700M700 730 695 755 660 780 645 795M705 725 690 760 665 778M625 770 640 785 630 795 655 800 660 775 640 765 650 790M625 775 650 775 635 800M632 780 652 784 640 792 656 790M622 898 625 807 655 815 658 795M510 895 622 898M658 912H622L620 983 607 985V1025L655 1028 645 1055 660 1085 668 1088 680 1075 690 1080V1060L685 985 667 983V912H695L700 895 680 858 705 860 718 845 705 815 715 770 700 755M658 912 662 862 678 845 685 820 690 800 670 780M715 770 740 800 768 820 745 840 752 870 722 905 720 925 700 910 690 930 692 957H740M715 720 740 730 752 745 745 765 780 775 800 805 845 775M715 725 735 735M655 1080 680 1085 693 1088 695 1060 685 1055' +
        'M845 775 860 765 870 738 890 735 905 740 910 770 905 790 890 795 880 770 870 755 888 750 900 765 880 760 870 740M870 745 910 760 885 775 900 785 915 770 895 740 875 765M878 742 902 754 876 758 906 772 888 788M872 750 894 746 900 780 884 782M845 775 855 800 880 800 915 790M855 800 860 830 883 847M968 775 965 735 985 725 1000 740 1010 735 1015 750M1012 768 1025 735 1020 700 1035 660 1032 630 1015 590 993 555V418M993 465 1210 460M1142 463V490L1130 502 1110 487 1085 490 1080 580 1092 600 1080 620 1090 655 1120 655 1130 645 1150 655 1155 690 1175 697M1020 702 1090 697 1130 690 1155 692M1043 695 1047 702' +
        'M945 150 1265 139 1272 155 1252 185H1300M958 280 988 270 975 250 980 220 993 215 1000 170 1020 180 1050 185 1053 220 1045 240 1060 272 1073 265 1077 215 1098 213 1118 217V247H1150V233H1165L1183 240 1180 270 1133 278 1135 310 1140 328 1090 335 1065 310 1043 303 1060 275M1092 148 1103 183 1070 190 1068 217M1138 328 1162 350V362L1143 368V388L1183 390V460M1330 85 1335 115 1312 133 1305 155 1300 182 1285 210 1272 235 1270 275 1245 290 1240 315 1215 350 1205 400 1212 440 1207 480 1225 520 1200 570 1185 600 1185 642M1338 62 1325 90M1312 133 1415 127M1415 127 1410 188 1382 192V225L1342 232V268M1270 273 1420 265 1510 258M1270 290 1272 313H1307V343L1325 345 1335 425 1347 428V490L1265 497 1290 510 1288 575 1245 577 1205 583M1275 240 1290 235 1290 250 1305 252 1298 270 1280 262M1420 265 1418 540 1433 685M1347 457H1383V425L1360 402H1393V420H1420M1418 535 1405 548 1350 560V592L1302 600V625L1325 635M1170 640 1325 635 1328 660 1340 700 1345 710M1170 640 1180 690 1205 720M1185 642 1190 655 1210 665 1235 650 1262 655 1268 680 1290 660H1325M1268 680 1270 705 1300 715 1290 725 1325 720M1205 720 1215 740 1225 755 1215 780 1250 778 1255 755 1285 745 1300 752 1330 720M1212 675 1220 690 1210 700 1225 715 1210 725 1220 735 1240 740 1270 730M1214 682 1224 702 1212 712 1230 722 1216 732M1270 705 1290 700 1275 690M1175 695 1183 700M1240 280 1250 300 1235 320 1220 340 1210 370 1200 400 1210 420 1200 440 1212 460M1250 288 1242 306 1248 322 1230 332 1226 350 1212 362 1214 384 1202 394 1206 410M1204 446 1214 456 1208 472 1218 490 1222 508 1214 524 1220 536 1206 556M1196 574 1202 584 1186 594 1192 610 1182 622M-105 205 -65 200 -5 208 30 212 33 222 75 222 85 212 97 205 103 240 167 250 158 320 77 313 77 265 60 262 75 255 87 250 70 243 38 248 30 212M167 250 170 235 252 242 250 298 275 300 277 327 292 330 292 345 300 340 325 350M1250 300 1240 310'
    },
    {
      name: 'southeast', x: 1450, y: 940,
      coast:
        'M918 0 940 20 975 65 977 105 940 140 918 175 885 180 848 205 835 235 827 265 785 270 755 300 742 347 720 380 700 400 665 420 650 445 638 465 625 500 612 555 612 590 630 640 660 700 700 755 717 775 715 800 750 860 782 915 785 960 790 1010M660 430 645 450 665 440M880 10 875 35 885 55 900 40 905 60 955 45M895 20 920 45 935 75 950 55M865 105 900 105 940 100 955 70M875 145 895 150 910 135 900 110M920 170 945 135' +
        'M110 688 160 685 230 667 270 672 320 700 325 720 350 722 385 700 370 715 345 725 325 712 328 703M385 700 405 680 425 672 450 685 480 710 505 735 530 745 542 765 550 800 540 830 545 860 560 885 580 915 605 948 620 975 645 985 665 1020 690 1030 710 1050 718 1080 770 1070 785 1040 790 1010M545 850 560 855 575 850 570 870 555 855 575 860 560 890M612 935 618 960 608 970 628 975M790 1035 785 1055 770 1080 750 1100 725 1118M670 1138 690 1118 712 1122 700 1132 670 1140ZM640 1142 662 1143M577 1147 582 1148M625 490 615 520',
      lines:
        'M0 130 60 127 62 113 300 95 520 63 640 48 890 3M0 268 160 255 255 247 345 237 435 223 485 200 585 187M130 108 133 130 150 130 165 132 175 155 170 168 130 170 103 165 105 138 133 135M175 155 205 162V220H228L220 200 222 175 300 172 325 180M300 95 305 115 292 130 305 155 310 175 325 180 340 150 375 125 375 100 335 95M325 178 370 185 425 160 445 130 495 125 500 100 520 95 520 63M175 170 155 190 132 200 128 215 160 225 163 255M268 245 285 202 300 210 295 230 310 235 325 180M345 235V212L365 205 368 185M395 85 410 100 395 120 410 140 385 135 380 155 390 175M495 125 520 125 520 110 550 108 550 145 530 155 490 155 480 172 465 165 470 155 490 150M490 175 487 200M550 145 570 130 572 105 640 100M585 135 583 190M585 135 595 165 600 200M640 48 645 90 665 95 660 105 643 105 647 145 710 135 725 160 755 160M600 145 620 135 647 145M600 145 605 165 600 180 620 185 655 175 700 178 720 195 740 185 750 165 745 145M570 135 600 140M720 38 725 65 695 68 697 100 718 103 720 68M725 98H758L755 110 730 107ZM725 98 740 80 765 55 805 55V105L760 125 745 125 755 160 780 190 780 208 765 210 755 230 738 240M805 105 825 95 850 100 905 85 903 55M805 105 830 160 848 205M620 212 690 203 785 270M600 190 605 212 625 215 660 260 672 272 665 295 640 315 628 285 605 272 602 290 590 280 570 285M672 272 727 290 725 345 742 347M595 275 610 285 600 295 595 280M585 187 600 190' +
        'M435 223 422 240 425 260 455 270 490 310 540 342 565 290 570 285 550 265 545 250 530 245 535 220 510 195 530 215 525 235 500 240 470 215M540 342 575 378 590 395 612 440 635 465M575 378 595 370 600 345 620 355 600 310 602 290M720 345 742 347M670 370 675 345 690 338 697 345 685 380 670 380ZM697 385 720 350 700 380M635 465 625 455 630 435 650 425 690 400 700 380M327 240 330 290 345 290 345 280M305 295 355 292 360 315 340 320 305 322ZM360 310 380 300 385 310 410 310 415 318 435 318 485 310M345 330 370 320 365 340 390 335 370 350 345 345 365 360 345 355 370 345M345 300 355 335 375 310M385 310 390 335 402 350 390 365 375 365 385 375 365 375 325 372 322 355 345 345M290 362 322 355 320 365M385 375 390 395 388 410 390 435 370 430 345 435 342 455 325 465M390 395 435 392 445 410 475 412 475 428 505 440 522 400 520 345 540 342M475 428 457 440 480 480 505 495 485 515 475 545 518 547 515 515 550 528 552 505 575 465 612 440M388 428 433 422 415 440 412 470 435 475V515H408L415 580 410 618M518 547 515 565 490 565 495 590 475 590 488 600 487 613' +
        'M255 247 325 465 325 500 330 590 350 620M75 268 72 450 68 560 85 685M75 268 120 285 148 280V318H187V295L215 290 235 280 255 255M268 308 255 305 258 325 245 350 210 345 195 380 213 395 210 420 245 423 248 450 180 465 182 485 235 495 225 525 188 530 185 542 140 545 140 575 118 605 110 590 115 570 105 562 68 562M210 340 190 335 175 355 150 385 145 400 165 405 190 375M160 400 170 380 185 385M145 400 155 415 120 430 105 425 103 397H73M155 420 138 440 170 460 180 465M248 450 260 480 225 488 190 492M110 555 122 555 118 570 128 570 125 585M240 495 250 507 290 492 325 508M240 485 245 505M187 545 155 595 205 597 210 613M10 402 40 400V420H72M15 425 33 425 33 455H0M0 558 45 552 45 540 68 533' +
        'M158 685 155 650 140 625 200 617 340 602 350 622 355 628 555 612 562 628 605 632 612 620 595 615 600 630M295 605 290 625 275 645 270 675M350 622 355 640 365 645 372 660 400 657 405 640 435 655 485 652 495 635 530 640 545 650 605 640 605 632M397 635 405 630 412 638 403 645ZM572 625V590L617 590M605 640 615 665 640 668M545 650 535 690 545 710 575 740 535 755M575 740 570 750 542 757M575 740 620 732 632 710 625 680 610 640M620 732 625 765 650 765V755H675L682 770 672 785 658 780 645 770M625 765V785L605 785 610 800 580 825 555 835 555 845M550 805 595 797 600 818M625 785 632 805 658 800 660 785M675 757 700 755M680 795 697 797 702 855M660 785 680 795M625 785 630 820 620 840 582 855 578 830M620 840 635 845 650 862 700 857 748 857M582 855 560 885M607 850 613 910 580 912M720 860 725 895 712 915 710 935 660 940 663 965 652 990 665 1022M620 948 640 955 655 955 660 965M712 915 735 912 760 930 780 925 782 935M712 915 725 1003 775 1000 785 990 765 995 762 985 780 985 770 970 775 945 755 935M765 930 782 940M683 1023 770 1018 778 1010 785 1005M770 1018 780 1040M775 950 785 970 775 980 785 1010'
    }
  ];

  const montana =
    'M1093 215 1230 244 1400 272 1500 286 1640 303 1803 321 1773 677 1610 660 1440 641 1332 626 1325 670 1315 655 1308 647 1300 660 1278 655 1262 658 1245 653 1225 657 1208 662 1200 650 1197 622 1188 615 1181 612 1178 600 1180 585 1172 570 1168 545 1160 533 1150 540 1136 546 1122 535 1127 512 1137 508 1135 485 1145 470 1152 443 1135 438 1122 415 1108 390 1095 372 1085 358 1086 335 1075 305 1085 255Z';

  // Share of spending per category, as start and end angle in degrees from twelve o'clock.
  const slices = [
    { from: 0, to: 100, fill: '#74e994' },
    { from: -1.45, to: 0, fill: '#6054b6' },
    { from: -16.85, to: -1.45, fill: '#5175d8' },
    { from: -40.05, to: -16.85, fill: '#9ff16f' },
    { from: -65, to: -40.05, fill: '#4c94db' },
    { from: -100, to: -65, fill: '#56b4cd' }
  ];
  const labels = [
    { x: 1358, y: 1854, w: 93, text: 'TRAVEL' },
    { x: 1018, y: 1766, w: 325, text: 'SUPPLIES AND MATERIALS' },
    { x: 1014, y: 1792, w: 184, text: 'FRANKED MAIL' },
    { x: 921, y: 1855, w: 219, text: 'OTHER SERVICES' }
  ];
  const OUTER = 283;
  const INNER = 189;

  function arc({ from, to }) {
    const at = (deg, r) => {
      const t = (deg * Math.PI) / 180;
      return `${(r * Math.sin(t)).toFixed(2)} ${(-r * Math.cos(t)).toFixed(2)}`;
    };
    return `M${at(from, OUTER)}A${OUTER} ${OUTER} 0 0 1 ${at(to, OUTER)}L${at(to, INNER)}A${INNER} ${INNER} 0 0 0 ${at(from, INNER)}Z`;
  }

  const ticks = ['1.0', '0.9', '0.8', '0.7', '0.6'];
</script>

<main class="page">
  <header>
    <h1><span>The 115th Congress &amp; You: Where Did Your Tax Dollars Go?</span></h1>
    <div class="intro">
      {#each intro as line}
        <p style:letter-spacing="{line.track}px">{line.text}</p>
      {/each}
      <p class="source">Data from <a href="#data">ProPublica</a></p>
    </div>
  </header>

  <div class="panel">
    <aside>
      <div class="years">
        {#each years as year}
          <button>{year}</button>
        {/each}
      </div>
      <div class="category">Category</div>
      <div class="select">
        <span>FRANKED MAIL</span>
        <svg width="18" height="12" viewBox="0 0 18 12"><path d="M2 2.5 9 9 16 2.5" fill="none" stroke="#000" stroke-width="3.4" /></svg>
      </div>
      <div class="summary">
        {#each summary as line}
          <p style:letter-spacing="{line.track}px">{line.text}</p>
        {/each}
      </div>
    </aside>

    <section class="content">
      <div class="top">
        <svg class="map" width="1520" height="880" viewBox="516 480 1520 880">
          {#each regions as r}
            <g transform="translate({r.x} {r.y}) scale(0.33333)">
              <path class="coast" d={r.coast} />
              <path class="border" d={r.lines} />
            </g>
          {/each}
          <g transform="translate(520 500) scale(0.33333)"><path class="selected" d={montana} /></g>
        </svg>

        <div class="profile">
          <p class="who">Hon. Greg Gianforte | Republican | Montana District 0</p>
          {#each contacts as c}
            <p class="contact {c.name}">
              <svg width={c.w / 16} height="32" viewBox="0 0 {c.w} 512"><path d={c.d} fill="currentColor" /></svg>
              <span style:letter-spacing="{c.track}px">{c.text}</span>
            </p>
          {/each}
        </div>
      </div>

      <svg class="charts" width="2750" height="410" viewBox="516 1480 2750 410">
        <g transform="translate(1218 1982)">
          {#each slices as s}
            <path d={arc(s)} fill={s.fill} stroke="#fff" stroke-width="4" />
          {/each}
        </g>
        <g class="labels">
          {#each labels as l}
            <text x={l.x} y={l.y} textLength={l.w}>{l.text}</text>
          {/each}
        </g>
        <g class="axis">
          <path d="M2148 1577H2161V1900" />
          {#each ticks as t, i}
            <path d="M2148 {1577 + i * 67.9}H2161" />
            <text x="2142" y={1583.5 + i * 67.9} text-anchor="end">{t}</text>
          {/each}
          <text class="title" transform="translate(2061 1851) rotate(-90)" text-anchor="end">Amount spent</text>
        </g>
      </svg>
    </section>
  </div>
</main>

<style>
  :global(body) {
    margin: 0;
    background: #0d0502;
  }
  .page {
    box-sizing: border-box;
    width: 3326px;
    height: 1890px;
    overflow: hidden;
    padding: 0 60px 0 64px;
    border-left: 2px solid #343130;
    background: #0d0502;
    color: #84817a;
    font: 32px/38px Lato, 'Open Sans', sans-serif;
  }
  header {
    height: 342px;
    white-space: nowrap;
  }
  h1 {
    margin: 0;
    padding-top: 30px;
    font: 400 66px/88px 'Noto Serif', 'Liberation Serif', serif;
  }
  h1 span {
    display: inline-block;
    transform: scaleX(0.9025);
    transform-origin: left;
  }
  .intro {
    margin: 40px 0 0;
  }
  .source {
    letter-spacing: 1.5px;
  }
  a {
    color: #65625c;
    text-decoration: none;
  }
  p {
    margin: 0;
  }
  .panel {
    display: flex;
    height: 1548px;
    border-radius: 20px 20px 0 0;
    background: #fff;
  }
  aside {
    box-sizing: border-box;
    width: 450px;
    padding: 150px 70px 0 60px;
    border-right: 6px solid #000;
    white-space: nowrap;
  }
  .years {
    display: grid;
    gap: 20px;
    margin: 0 10px 0 20px;
  }
  button {
    height: 78px;
    padding: 0;
    border: 4px solid;
    border-color: #767676 #212121 #212121 #767676;
    border-radius: 0;
    background: #67645a;
    color: #fff;
    font: 26.67px/30px 'Liberation Sans', Arial, sans-serif;
  }
  .category {
    margin: 240px 0 0 22px;
    letter-spacing: 1.6px;
  }
  .select {
    display: flex;
    box-sizing: border-box;
    align-items: center;
    justify-content: space-between;
    width: 304px;
    height: 38px;
    margin: 13px 0 0 10px;
    padding: 1px 7px 0 6px;
    border: 2px solid #767676;
    border-radius: 6px;
    color: #000;
    font: 26.67px/30px 'Liberation Sans', Arial, sans-serif;
  }
  .summary {
    margin: 169px 0 0 -1px;
  }
  .content {
    display: flex;
    flex: 1;
    flex-direction: column;
  }
  .top {
    display: flex;
    height: 1138px;
  }
  .map {
    flex: none;
    margin-top: 138px;
  }
  .map path {
    fill: none;
    stroke-width: 2.8;
    stroke-linejoin: round;
  }
  .map .coast {
    stroke: #aaa;
  }
  .map .border {
    stroke: #6a6a6a;
  }
  .map .selected {
    fill: #377f22;
    stroke: #33701f;
  }
  .profile {
    margin: 251px 0 0 15px;
    color: #569243;
    white-space: nowrap;
  }
  .who {
    margin-bottom: 38px;
    letter-spacing: 1.05px;
  }
  .contact {
    display: flex;
    gap: 9px;
    height: 38px;
  }
  .contact svg {
    flex: none;
    margin-top: 1px;
  }
  .youtube {
    color: #7c7972;
  }
  .address {
    margin-top: 38px;
  }
  .charts {
    flex: none;
  }
  .labels {
    opacity: 0.7;
    font: 24.5px 'Liberation Sans', Arial, sans-serif;
  }
  .axis path {
    fill: none;
    stroke: #84817a;
    stroke-width: 2;
  }
  .axis text {
    fill: #84817a;
    stroke: #84817a;
    stroke-width: 0.7;
    font: 20px 'Liberation Sans', Arial, sans-serif;
  }
  .axis .title {
    fill: #377f22;
    stroke: #377f22;
  }
</style>
